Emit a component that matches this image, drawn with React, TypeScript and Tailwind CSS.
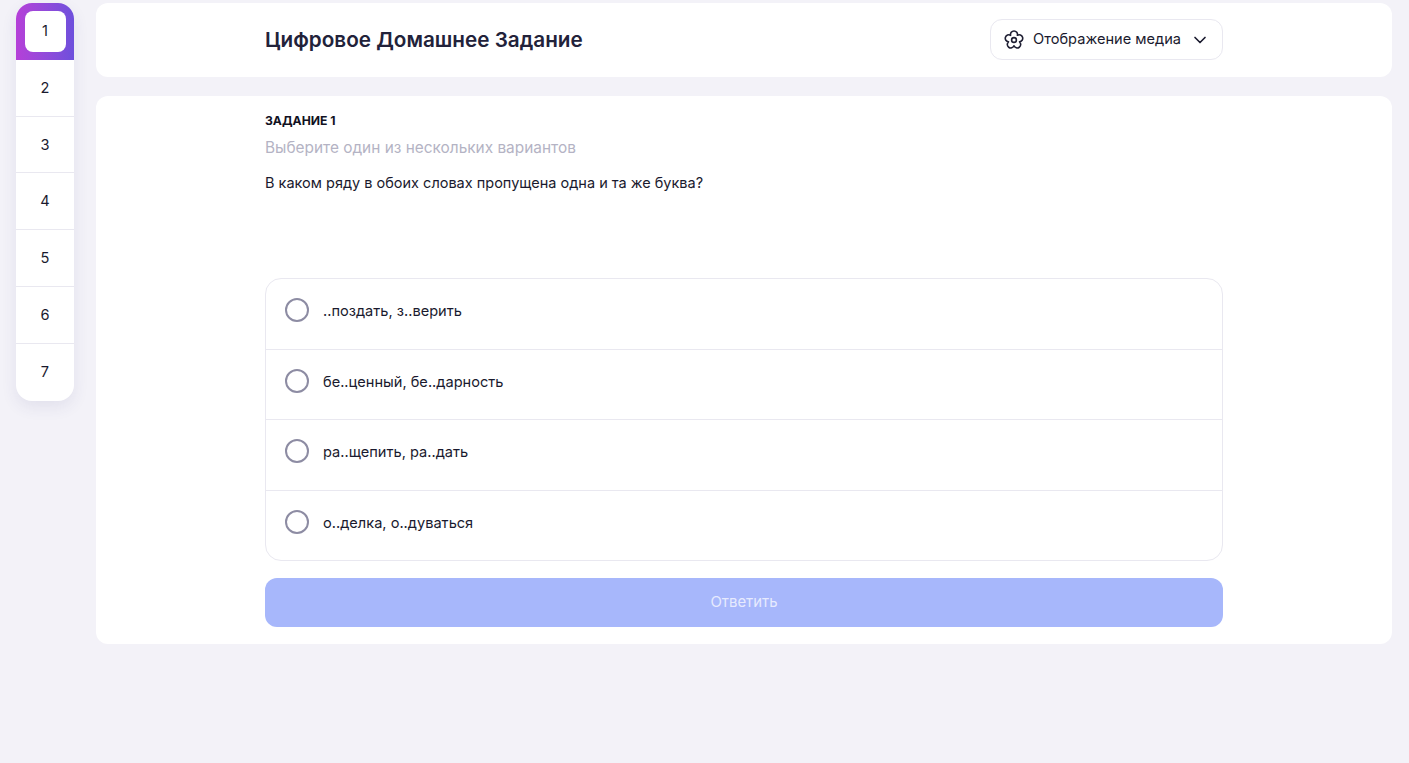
import { ChevronDown } from "lucide-react";

const TASKS = [1, 2, 3, 4, 5, 6, 7];

const OPTIONS = [
  "..поздать, з..верить",
  "бе..ценный, бе..дарность",
  "ра..щепить, ра..дать",
  "о..делка, о..дуваться",
];

function TaskNav() {
  return (
    <div className="w-[58px] shrink-0 overflow-hidden rounded-2xl bg-white shadow-[0_6px_16px_rgba(60,50,120,0.09)]">
      {TASKS.map((n) =>
        n === 1 ? (
          <div
            key={n}
            className="flex h-[56.8px] items-center justify-center bg-gradient-to-r from-[#b53fd8] to-[#6d4fdc]"
          >
            <span className="flex h-[41px] w-[41px] items-center justify-center rounded-lg bg-white pt-[2px] text-[14.6px] text-[#1a1a2e]">
              {n}
            </span>
          </div>
        ) : (
          <div
            key={n}
            className="flex h-[56.8px] items-center justify-center border-b border-[#e9e8f0] pt-[2px] text-[14.6px] text-[#1a1a2e] last:border-b-0"
          >
            {n}
          </div>
        ),
      )}
    </div>
  );
}

function GearIcon() {
  return (
    <svg width="20" height="20" viewBox="0 0 20 20" fill="none" stroke="#1f1f33" strokeWidth="1.6" strokeLinejoin="round">
      <path d="M6.59 5.31A3.5 3.5 0 1 1 13.41 5.31A3.5 3.5 0 1 1 15.52 11.79A3.5 3.5 0 1 1 10 15.8A3.5 3.5 0 1 1 4.48 11.79A3.5 3.5 0 1 1 6.59 5.31Z" />
      <circle cx="10" cy="10" r="2.4" />
    </svg>
  );
}

export default function App() {
  return (
    <div className="flex min-h-[763px] items-start gap-[22px] bg-[#f3f2f8] pt-[3px] pr-[17px] pl-4 font-['Inter',sans-serif] text-[#1a1a2e]">
      <TaskNav />

      <div className="flex flex-1 flex-col gap-[19px]">
        {/* Header */}
        <div className="flex h-[74px] justify-center rounded-xl bg-white">
          <div className="flex w-[958px] items-center justify-between">
            <h1 className="text-[20.7px] font-semibold text-[#22223a]">Цифровое Домашнее Задание</h1>
            <button className="mb-[2px] flex h-[41px] w-[233px] items-center gap-[9px] rounded-xl border border-[#e9e8f0] pt-[2px] pr-[12px] pl-[13px] text-[14.6px]">
              <GearIcon />
              <span className="flex-1 text-left">Отображение медиа</span>
              <ChevronDown className="h-5 w-5" strokeWidth={2} />
            </button>
          </div>
        </div>

        {/* Task */}
        <div className="flex h-[548px] justify-center rounded-xl bg-white">
          <div className="w-[958px] pt-[17px]">
            <div className="text-[12.2px] leading-4 font-bold text-[#111122]">ЗАДАНИЕ 1</div>
            <p className="mt-[9px] text-[15.4px] leading-5 text-[#b4b3c4]">Выберите один из нескольких вариантов</p>
            <p className="mt-[15px] text-[14.5px] leading-5">В каком ряду в обоих словах пропущена одна и та же буква?</p>

            <div className="mt-[85px] rounded-2xl border border-[#e9e8f0]">
              {OPTIONS.map((option) => (
                <label
                  key={option}
                  className="flex h-[70.5px] items-start gap-[14px] border-b border-[#e9e8f0] pt-[19px] pl-[19px] text-[14.6px] last:h-[69.5px] last:border-b-0"
                >
                  <span className="h-6 w-6 shrink-0 rounded-full border-2 border-[#8d8ca3]" />
                  <span className="mt-[3px] leading-5">{option}</span>
                </label>
              ))}
            </div>

            <button className="mt-[17px] h-[49px] w-full rounded-xl bg-[#a7b7fb] pb-[1px] text-[14.9px] text-[#e6eafe]">Ответить</button>
          </div>
        </div>
      </div>
    </div>
  );
}
